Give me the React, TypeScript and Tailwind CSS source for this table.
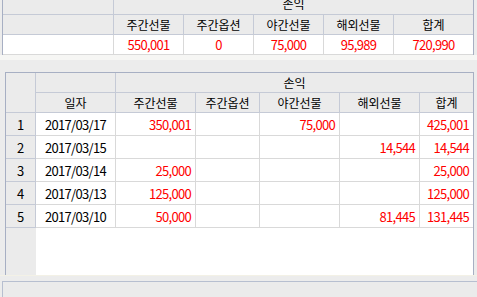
import React from 'react';

const font = { fontFamily: '"Noto Sans CJK KR", "Liberation Sans", sans-serif' };

type BottomRow = { no: number; date: string; day: string; opt: string; night: string; abroad: string; sum: string };

const rows: BottomRow[] = [
  { no: 1, date: '2017/03/17', day: '350,001', opt: '', night: '75,000', abroad: '', sum: '425,001' },
  { no: 2, date: '2017/03/15', day: '', opt: '', night: '', abroad: '14,544', sum: '14,544' },
  { no: 3, date: '2017/03/14', day: '25,000', opt: '', night: '', abroad: '', sum: '25,000' },
  { no: 4, date: '2017/03/13', day: '125,000', opt: '', night: '', abroad: '', sum: '125,000' },
  { no: 5, date: '2017/03/10', day: '50,000', opt: '', night: '', abroad: '81,445', sum: '131,445' },
];

const hd = 'flex items-center justify-center bg-[#ebebeb] text-black';
const num = 'flex items-center justify-end pr-[4px] text-[#ff0000] text-[13px] tracking-[-0.7px]';

const App: React.FC = () => {
  return (
    <div className="w-[477px] h-[297px] bg-[#ececec] overflow-hidden text-[12px] leading-none flex flex-col" style={font}>
      {/* summary grid (scrolled so the top header row is cut) */}
      <div className="ml-[2px] w-[472px] h-[55px] overflow-hidden border-l border-r border-[#a7afc3] bg-white">
        <div className="-mt-[6px] flex flex-col">
          <div className="flex h-[21px] border-b border-[#c5cad6]">
            <div className={`${hd} w-[111px] border-r border-[#c5cad6]`} />
            <div className={`${hd} flex-1 items-start pt-[4px]`}>손익</div>
          </div>
          <div className="flex h-[20px] border-b border-[#c5cad6]">
            <div className={`${hd} w-[111px] border-r border-[#c5cad6]`} />
            <div className={`${hd} w-[70px] border-r border-[#c5cad6]`}>주간선물</div>
            <div className={`${hd} w-[70px] border-r border-[#c5cad6]`}>주간옵션</div>
            <div className={`${hd} w-[70px] border-r border-[#c5cad6]`}>야간선물</div>
            <div className={`${hd} w-[70px] border-r border-[#c5cad6]`}>해외선물</div>
            <div className={`${hd} w-[79px]`}>합계</div>
          </div>
          <div className="flex h-[20px] border-b border-[#d9d9d9] text-[#ff0000] text-[13px] tracking-[-0.7px]">
            <div className="w-[111px] border-r border-[#d9d9d9]" />
            <div className="w-[70px] border-r border-[#d9d9d9] flex items-center justify-center">550,001</div>
            <div className="w-[70px] border-r border-[#d9d9d9] flex items-center justify-center">0</div>
            <div className="w-[70px] border-r border-[#d9d9d9] flex items-center justify-center">75,000</div>
            <div className="w-[70px] border-r border-[#d9d9d9] flex items-center justify-center">95,989</div>
            <div className="w-[79px] flex items-center justify-center">720,990</div>
          </div>
        </div>
      </div>
      <div className="h-[5px] bg-[#f6f6f4]" />
      <div className="h-[12px]" />

      {/* detail grid */}
      <div className="ml-[5px] w-[469px] h-[203px] border-t border-l border-r border-[#a7afc3] bg-white flex flex-col">
        <div className="flex h-[40px] border-b border-[#c5cad6]">
          <div className={`${hd} w-[30px] border-r border-[#c5cad6]`} />
          <div className="flex flex-col flex-1">
            <div className="flex h-[20px] border-b border-[#c5cad6]">
              <div className={`${hd} w-[80px] border-r border-[#c5cad6]`} />
              <div className={`${hd} flex-1`}>손익</div>
            </div>
            <div className="flex h-[19px]">
              <div className={`${hd} w-[80px] border-r border-[#c5cad6]`}>일자</div>
              <div className={`${hd} w-[80px] border-r border-[#c5cad6]`}>주간선물</div>
              <div className={`${hd} w-[64px] border-r border-[#c5cad6]`}>주간옵션</div>
              <div className={`${hd} w-[80px] border-r border-[#c5cad6]`}>야간선물</div>
              <div className={`${hd} w-[80px] border-r border-[#c5cad6]`}>해외선물</div>
              <div className={`${hd} flex-1`}>합계</div>
            </div>
          </div>
        </div>
        {rows.map((r) => (
          <div key={r.no} className="flex h-[23px]">
            <div className={`${hd} w-[30px] border-r border-b border-[#c5cad6] text-[13px]`}>{r.no}</div>
            <div className="flex flex-1 border-b border-[#d9d9d9]">
              <div className="w-[80px] border-r border-[#d9d9d9] flex items-center justify-center text-black text-[13px] tracking-[-0.7px]">{r.date}</div>
              <div className={`${num} w-[80px] border-r border-[#d9d9d9]`}>{r.day}</div>
              <div className={`${num} w-[64px] border-r border-[#d9d9d9]`}>{r.opt}</div>
              <div className={`${num} w-[80px] border-r border-[#d9d9d9]`}>{r.night}</div>
              <div className={`${num} w-[80px] border-r border-[#d9d9d9]`}>{r.abroad}</div>
              <div className={`${num} flex-1`}>{r.sum}</div>
            </div>
          </div>
        ))}
        <div className="flex flex-1">
          <div className="w-[30px] bg-[#ebebeb]" />
          <div className="flex-1" />
        </div>
      </div>
      <div className="h-[1px] bg-[#f3f1e6]" />
      <div className="h-[5px]" />

      {/* status bar */}
      <div className="ml-[2px] flex-1 border-t border-l border-[#b7bfd0] bg-[#ebebeb]" />
    </div>
  );
};

export default App;
